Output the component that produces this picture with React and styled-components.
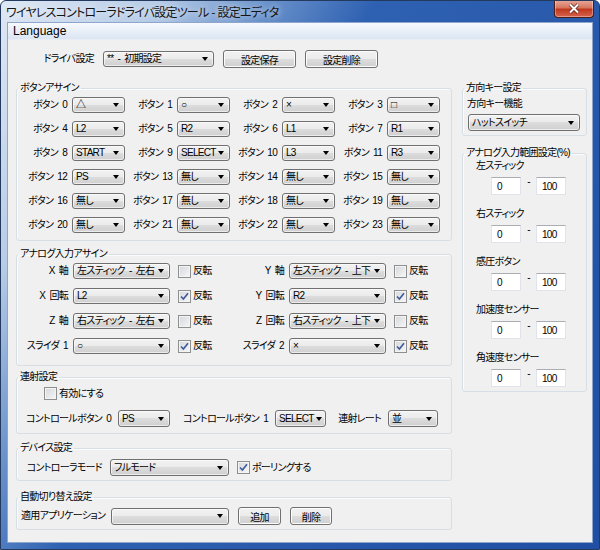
import React from 'react';
import styled, { createGlobalStyle } from 'styled-components';

const FONT = `"Liberation Sans", "Noto Sans CJK JP", sans-serif`;

const GlobalStyle = createGlobalStyle`
  html, body {
    margin: 0;
    padding: 0;
    background: #ffffff;
  }
  * {
    box-sizing: border-box;
  }
  body {
    font-family: ${FONT};
    font-size: 10px;
    letter-spacing: -0.7px;
    word-spacing: 2px;
    color: #000;
    font-feature-settings: "palt";
  }
`;

const Window = styled.div`
  width: 600px;
  height: 550px;
  display: flex;
  flex-direction: column;
  border: 1px solid #24395e;
  border-radius: 6px 6px 0 0;
  overflow: hidden;
  background: linear-gradient(120deg, #dfe8f4 0%, #b7cce7 17%, #6b93cb 29%, #2f61b2 41%, #1f4ea2 100%);
`;

const TitleBar = styled.div`
  height: 22px;
  display: flex;
  align-items: flex-start;
  justify-content: space-between;
`;

const TitleText = styled.div`
  padding: 4px 0 0 5px;
  font-family: "Noto Sans CJK JP", sans-serif;
  font-size: 12px;
  letter-spacing: -0.8px;
  word-spacing: 1px;
  line-height: 14px;
  color: #141414;
  text-shadow: 0 0 6px rgba(255, 255, 255, 0.9);
`;

const CloseButton = styled.div`
  width: 40px;
  height: 18px;
  margin: -1px 5px 0 0;
  display: flex;
  align-items: center;
  justify-content: center;
  border: 1px solid #4a1e16;
  border-top: none;
  border-radius: 0 0 4px 4px;
  background: linear-gradient(#e8aa9c 0%, #d7765f 45%, #bf381e 55%, #d5644c 100%);
  box-shadow: inset 0 0 0 1px rgba(255, 255, 255, 0.35);
`;

const Client = styled.div`
  flex: 1;
  margin: 0 7px 7px;
  background: #f0f0f0;
  box-shadow: 0 0 0 1px #8ea6cc;
  display: flex;
  flex-direction: column;
`;

const MenuBar = styled.div`
  height: 17px;
  padding-left: 5px;
  font-size: 12px;
  letter-spacing: 0;
  line-height: 17px;
  background: linear-gradient(#f7f9fd, #dbe5f3);
  border-bottom: 1px solid #e8edf4;
`;

const Body = styled.div`
  padding: 0 5px 0 8px;
`;

const TopRow = styled.div`
  margin-top: 10px;
  display: grid;
  grid-template-columns: 78px 111px 73px 73px;
  column-gap: 9px;
  align-items: center;
  height: 18px;
`;

const Main = styled.div`
  margin-top: 14px;
  display: flex;
  gap: 10px;
`;

const LeftCol = styled.div`
  width: 436px;
  display: flex;
  flex-direction: column;
`;

const RightCol = styled.div`
  width: 125px;
  display: flex;
  flex-direction: column;
`;

const Group = styled.fieldset`
  margin: ${(p) => p.$mt || 0}px 0 0;
  padding: ${(p) => p.$pt}px 4px ${(p) => p.$pb}px;
  border: 1px solid #d5dfe5;
  border-radius: 3px;
  min-width: 0;
  box-shadow: inset 1px 1px 0 #fbfbfb;
`;

const Legend = styled.legend`
  padding: 0 2px;
  margin-left: -3px;
  font-size: 10px;
  line-height: 12px;
  white-space: nowrap;
`;

const Label = styled.span`
  white-space: nowrap;
  line-height: 12px;
  text-align: ${(p) => p.$align || 'left'};
  padding-right: ${(p) => p.$pr || 0}px;
`;

const ComboBox = styled.div`
  width: ${(p) => p.$w}px;
  height: ${(p) => p.$h || 16}px;
  flex-shrink: 0;
  display: flex;
  align-items: center;
  justify-content: space-between;
  padding: 0 5px 0 3px;
  border: 1px solid #707070;
  border-radius: 3px;
  background: linear-gradient(#f2f2f2 0%, #ebebeb 50%, #dddddd 50%, #cfcfcf 100%);
  box-shadow: inset 0 0 0 1px rgba(255, 255, 255, 0.6);
  line-height: 12px;
  white-space: nowrap;
  overflow: hidden;
`;

const Arrow = styled.span`
  flex-shrink: 0;
  width: 0;
  height: 0;
  margin-left: 2px;
  border-left: 3.5px solid transparent;
  border-right: 3.5px solid transparent;
  border-top: 4px solid #000;
`;

const PushButton = styled.button`
  width: ${(p) => p.$w}px;
  height: 18px;
  padding: 0;
  border: 1px solid #707070;
  border-radius: 3px;
  background: linear-gradient(#f2f2f2 0%, #ebebeb 50%, #dddddd 50%, #cfcfcf 100%);
  box-shadow: inset 0 0 0 1px #fcfcfc;
  font-family: ${FONT};
  font-size: 10px;
  letter-spacing: -0.7px;
  font-feature-settings: "palt";
  color: #000;
`;

const CheckRow = styled.label`
  display: flex;
  align-items: center;
  gap: 2px;
  white-space: nowrap;
  line-height: 12px;
  padding-left: ${(p) => p.$pl || 0}px;
`;

const Box = styled.span`
  width: 13px;
  height: 13px;
  flex-shrink: 0;
  display: flex;
  align-items: center;
  justify-content: center;
  border: 1px solid #8e8f8f;
  background: linear-gradient(135deg, #d4d7dc 0%, #f7f7f7 100%);
  box-shadow: inset 0 0 0 1px #f4f4f4;
`;

const TextBox = styled.div`
  width: 30px;
  height: 18px;
  padding: 3px 0 0 5px;
  background: #fff;
  border: 1px solid #e2e3ea;
  border-top-color: #abadb3;
  line-height: 12px;
`;

const AssignGrid = styled.div`
  display: grid;
  grid-template-columns: repeat(4, 104px);
  column-gap: 1px;
  row-gap: 8px;
`;

const AssignCell = styled.div`
  display: flex;
  align-items: center;
  justify-content: flex-end;
  gap: 5px;
`;

const AxisGrid = styled.div`
  display: grid;
  grid-template-columns: 52px 105px 58px 53px 105px auto;
  row-gap: 9px;
  align-items: center;
`;

const RapidBody = styled.div`
  display: flex;
  flex-direction: column;
  gap: 10px;
`;

const RapidRow = styled.div`
  display: grid;
  grid-template-columns: 90px 52px 91px 51px 48px 50px;
  column-gap: 7px;
  align-items: center;
`;

const DeviceRow = styled.div`
  display: grid;
  grid-template-columns: 81px 119px auto;
  column-gap: 8px;
  align-items: center;
`;

const AutoRow = styled.div`
  display: grid;
  grid-template-columns: 81px 118px 43px 42px;
  column-gap: 9px;
  align-items: center;
`;

const DirBody = styled.div`
  display: flex;
  flex-direction: column;
  gap: 4px;
  padding-top: 2px;
  & > div {
    margin-left: 1px;
  }
`;

const RangeList = styled.div`
  display: flex;
  flex-direction: column;
  gap: 13px;
`;

const RangeBlock = styled.div`
  display: flex;
  flex-direction: column;
  gap: 5px;
  padding-left: 9px;
`;

const RangeInputs = styled.div`
  display: flex;
  align-items: flex-start;
  padding-left: 15px;
`;

const Dash = styled.span`
  width: 15px;
  text-align: center;
  line-height: 10px;
`;

const CheckMark = () => (
  <svg width="9" height="9" viewBox="0 0 9 9">
    <path d="M1 4.5 L3.4 7 L8 1.2" fill="none" stroke="#3f5a9a" strokeWidth="1.6" />
  </svg>
);

const CloseGlyph = () => (
  <svg width="12" height="11" viewBox="0 0 12 11">
    <path d="M2 1.5 L10 9.5 M10 1.5 L2 9.5" stroke="#5a2015" strokeWidth="3.4" />
    <path d="M2 1.5 L10 9.5 M10 1.5 L2 9.5" stroke="#ffffff" strokeWidth="2" />
  </svg>
);

const Combo = ({ w, h, children }) => (
  <ComboBox $w={w} $h={h}>
    <span>{children}</span>
    <Arrow />
  </ComboBox>
);

const Check = ({ checked, children, pl }) => (
  <CheckRow $pl={pl}>
    <Box>{checked && <CheckMark />}</Box>
    {children}
  </CheckRow>
);

const buttonValues = [
  '△', '○', '×', '□',
  'L2', 'R2', 'L1', 'R1',
  'START', 'SELECT', 'L3', 'R3',
  'PS', '無し', '無し', '無し',
  '無し', '無し', '無し', '無し',
  '無し', '無し', '無し', '無し',
];

const axisRows = [
  [['X 軸', '左スティック - 左右', false], ['Y 軸', '左スティック - 上下', false]],
  [['X 回転', 'L2', true], ['Y 回転', 'R2', true]],
  [['Z 軸', '右スティック - 左右', false], ['Z 回転', '右スティック - 上下', false]],
  [['スライダ 1', '○', true], ['スライダ 2', '×', true]],
];

const ranges = ['左スティック', '右スティック', '感圧ボタン', '加速度センサー', '角速度センサー'];

export default function App() {
  return (
    <>
      <GlobalStyle />
      <Window>
        <TitleBar>
          <TitleText>ワイヤレスコントローラドライバ設定ツール - 設定エディタ</TitleText>
          <CloseButton>
            <CloseGlyph />
          </CloseButton>
        </TitleBar>
        <Client>
          <MenuBar>Language</MenuBar>
          <Body>
            <TopRow>
              <Label $align="right">ドライバ設定</Label>
              <Combo w={111}>** - 初期設定</Combo>
              <PushButton $w={73}>設定保存</PushButton>
              <PushButton $w={73}>設定削除</PushButton>
            </TopRow>

            <Main>
              <LeftCol>
                <Group $pt={3} $pb={7}>
                  <Legend>ボタンアサイン</Legend>
                  <AssignGrid>
                    {buttonValues.map((v, i) => (
                      <AssignCell key={i}>
                        <Label>ボタン {i}</Label>
                        <Combo w={53}>{v}</Combo>
                      </AssignCell>
                    ))}
                  </AssignGrid>
                </Group>

                <Group $mt={7} $pt={3} $pb={11}>
                  <Legend>アナログ入力アサイン</Legend>
                  <AxisGrid>
                    {axisRows.map((row) =>
                      row.map(([name, value, inv]) => (
                        <React.Fragment key={name}>
                          <Label $align="right" $pr={5}>{name}</Label>
                          <Combo w={97}>{value}</Combo>
                          <Check checked={inv}>反転</Check>
                        </React.Fragment>
                      ))
                    )}
                  </AxisGrid>
                </Group>

                <Group $mt={5} $pt={4} $pb={6}>
                  <Legend>連射設定</Legend>
                  <RapidBody>
                    <Check pl={23}>有効にする</Check>
                    <RapidRow>
                      <Label $align="right">コントロールボタン 0</Label>
                      <Combo w={52} h={17}>PS</Combo>
                      <Label $align="right">コントロールボタン 1</Label>
                      <Combo w={51} h={17}>SELECT</Combo>
                      <Label $align="right">連射レート</Label>
                      <Combo w={50} h={17}>並</Combo>
                    </RapidRow>
                  </RapidBody>
                </Group>

                <Group $mt={8} $pt={5} $pb={4}>
                  <Legend>デバイス設定</Legend>
                  <DeviceRow>
                    <Label $align="right">コントローラモード</Label>
                    <Combo w={119} h={17}>フルモード</Combo>
                    <Check checked>ポーリングする</Check>
                  </DeviceRow>
                </Group>

                <Group $mt={10} $pt={4} $pb={4}>
                  <Legend>自動切り替え設定</Legend>
                  <AutoRow>
                    <Label $align="right">適用アプリケーション</Label>
                    <Combo w={118} h={17}></Combo>
                    <PushButton $w={43}>追加</PushButton>
                    <PushButton $w={42}>削除</PushButton>
                  </AutoRow>
                </Group>
              </LeftCol>

              <RightCol>
                <Group $pt={2} $pb={4}>
                  <Legend>方向キー設定</Legend>
                  <DirBody>
                    <Label>方向キー機能</Label>
                    <Combo w={112} h={17}>ハットスイッチ</Combo>
                  </DirBody>
                </Group>

                <Group $mt={11} $pt={1} $pb={4}>
                  <Legend>アナログ入力範囲設定(%)</Legend>
                  <RangeList>
                    {ranges.map((r) => (
                      <RangeBlock key={r}>
                        <Label>{r}</Label>
                        <RangeInputs>
                          <TextBox>0</TextBox>
                          <Dash>-</Dash>
                          <TextBox>100</TextBox>
                        </RangeInputs>
                      </RangeBlock>
                    ))}
                  </RangeList>
                </Group>
              </RightCol>
            </Main>
          </Body>
        </Client>
      </Window>
    </>
  );
}
